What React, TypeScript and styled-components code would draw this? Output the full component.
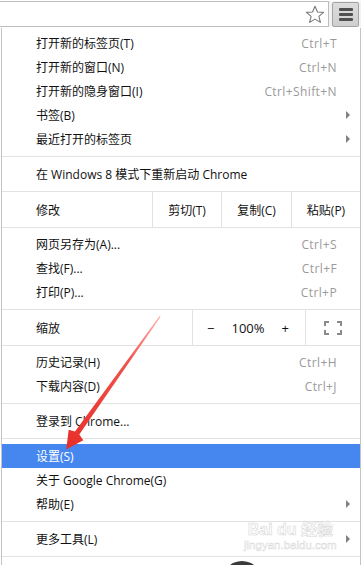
import styled, { createGlobalStyle } from "styled-components";

const GlobalStyle = createGlobalStyle`
	html, body {
		margin: 0;
		padding: 0;
		background: #fff;
	}
	body {
		font-family: "Open Sans", "Noto Sans CJK SC", sans-serif;
		font-size: 12px;
		color: #111;
	}
`;

type Item = {
	label: string;
	shortcut?: string;
	submenu?: boolean;
	active?: boolean;
};

const group1: Item[] = [
	{ label: "打开新的标签页(T)", shortcut: "Ctrl+T" },
	{ label: "打开新的窗口(N)", shortcut: "Ctrl+N" },
	{ label: "打开新的隐身窗口(I)", shortcut: "Ctrl+Shift+N" },
	{ label: "书签(B)", submenu: true },
	{ label: "最近打开的标签页", submenu: true },
];

const group2: Item[] = [
	{ label: "网页另存为(A)...", shortcut: "Ctrl+S" },
	{ label: "查找(F)...", shortcut: "Ctrl+F" },
	{ label: "打印(P)...", shortcut: "Ctrl+P" },
];

const group3: Item[] = [
	{ label: "历史记录(H)", shortcut: "Ctrl+H" },
	{ label: "下载内容(D)", shortcut: "Ctrl+J" },
];

const group4: Item[] = [
	{ label: "设置(S)", active: true },
	{ label: "关于 Google Chrome(G)" },
	{ label: "帮助(E)", submenu: true },
];

const MenuRow = ({ item }: { item: Item }) => (
	<Row $active={item.active}>
		<span>{item.label}</span>
		{item.shortcut && <Shortcut>{item.shortcut}</Shortcut>}
		{item.submenu && <Chevron />}
	</Row>
);

const App = () => {
	return (
		<Page>
			<GlobalStyle />
			<Toolbar>
				<AddressBox>
					<svg width="20" height="19" viewBox="0 0 20 19">
						<path
							d="M10 1.2 L12.5 7 L18.6 7.4 L13.9 11.3 L15.4 17.4 L10 14.1 L4.6 17.4 L6.1 11.3 L1.4 7.4 L7.5 7 Z"
							fill="none"
							stroke="#7a7a7a"
							strokeWidth="1.1"
							strokeLinejoin="round"
						/>
					</svg>
				</AddressBox>
				<MenuButton>
					<Bar />
					<Bar />
					<Bar />
				</MenuButton>
			</Toolbar>

			<Menu>
				<Group $top={3}>
					{group1.map((item) => (
						<MenuRow key={item.label} item={item} />
					))}
				</Group>
				<Separator />
				<MenuRow item={{ label: "在 Windows 8 模式下重新启动 Chrome" }} />
				<ButtonRow>
					<RowLabel>修改</RowLabel>
					<Cell $width={69}>剪切(T)</Cell>
					<Cell $width={70}>复制(C)</Cell>
					<Cell $width={69}>粘贴(P)</Cell>
				</ButtonRow>
				{group2.map((item) => (
					<MenuRow key={item.label} item={item} />
				))}
				<ButtonRow>
					<RowLabel>缩放</RowLabel>
					<ZoomCell>
						<span>−</span>
						<span>100%</span>
						<span>+</span>
					</ZoomCell>
					<Cell $width={55}>
						<svg width="18" height="14" viewBox="0 0 18 14">
							<path
								d="M1 5V1H5 M13 1H17V5 M17 9V13H13 M5 13H1V9"
								fill="none"
								stroke="#8a8a8a"
								strokeWidth="2"
							/>
						</svg>
					</Cell>
				</ButtonRow>
				{group3.map((item) => (
					<MenuRow key={item.label} item={item} />
				))}
				<Separator />
				<MenuRow item={{ label: "登录到 Chrome..." }} />
				<Separator />
				{group4.map((item) => (
					<MenuRow key={item.label} item={item} />
				))}
				<Separator />
				<MenuRow item={{ label: "更多工具(L)", submenu: true }} />
				<Separator />
			</Menu>

			<Watermark>
				<WatermarkLogo>Bai du 经验</WatermarkLogo>
				<WatermarkUrl>jingyan.baidu.com</WatermarkUrl>
			</Watermark>

			<DarkBlob />

			<ArrowLayer width="361" height="565" viewBox="0 0 361 565">
				<defs>
					<linearGradient id="arrowFade" x1="160" y1="316" x2="70" y2="445" gradientUnits="userSpaceOnUse">
						<stop offset="0" stopColor="#ffb3b3" />
						<stop offset="0.35" stopColor="#f0534d" />
						<stop offset="1" stopColor="#e8302a" />
					</linearGradient>
				</defs>
				<polygon
					points="159.6,316 160.6,316.8 79.3,434.4 83.3,440.2 66.2,449.5 68.7,429.8 75,431.5"
					fill="url(#arrowFade)"
				/>
			</ArrowLayer>
		</Page>
	);
};

export default App;

const Page = styled.div`
	position: relative;
	width: 361px;
	height: 565px;
	overflow: hidden;
	background: #fff;
`;

const Toolbar = styled.div`
	display: flex;
	align-items: stretch;
	height: 28px;
	box-sizing: border-box;
	border-top: 1px solid #fff;
	border-bottom: 1px solid #fff;
	background: #f2f2f2;
`;

const AddressBox = styled.div`
	flex: 1;
	display: flex;
	align-items: center;
	justify-content: flex-end;
	padding-right: 3px;
	background: #fff;
	border: 1px solid #bcbcbc;
	border-left: none;
	margin-right: 3px;
`;

const MenuButton = styled.div`
	width: 27px;
	margin: 1px 2px 0 0;
	box-sizing: border-box;
	display: flex;
	flex-direction: column;
	align-items: center;
	justify-content: center;
	gap: 2px;
	background: linear-gradient(#dcdcdc, #cfcfcf);
	border: 1px solid #a3a3a3;
	border-radius: 2px;
`;

const Bar = styled.div`
	width: 14px;
	height: 3px;
	background: #505050;
	border-radius: 1px;
`;

const Menu = styled.div`
	margin-left: 1px;
	width: 358px;
	min-height: 540px;
	border-left: 1px solid #c4c4c4;
	border-right: 1px solid #c4c4c4;
	background: #fff;
`;

const Group = styled.div<{ $top: number }>`
	padding-top: ${(p) => p.$top}px;
`;

const Row = styled.div<{ $active?: boolean }>`
	display: flex;
	align-items: center;
	justify-content: space-between;
	height: 24px;
	padding: 0 23px 0 34px;
	background: ${(p) => (p.$active ? "#4687ef" : "transparent")};
	color: ${(p) => (p.$active ? "#fff" : "#111")};
	white-space: nowrap;
	position: relative;
`;

const Shortcut = styled.span`
	color: #9a9a9a;
	letter-spacing: 0.4px;
`;

const Chevron = styled.span`
	position: absolute;
	right: 10px;
	top: 8px;
	width: 0;
	height: 0;
	border-top: 4px solid transparent;
	border-bottom: 4px solid transparent;
	border-left: 4px solid #808080;
`;

const Separator = styled.div`
	height: 1px;
	margin: 5px 0;
	background: #e2e2e2;
`;

const ButtonRow = styled.div`
	display: flex;
	align-items: stretch;
	height: 35px;
	margin: 5px 0 4px;
	border-top: 1px solid #e2e2e2;
	border-bottom: 1px solid #e2e2e2;
`;

const RowLabel = styled.div`
	flex: 1;
	display: flex;
	align-items: center;
	padding-left: 34px;
`;

const Cell = styled.div<{ $width: number }>`
	width: ${(p) => p.$width}px;
	box-sizing: border-box;
	display: flex;
	align-items: center;
	justify-content: center;
	border-left: 1px solid #e2e2e2;
`;

const ZoomCell = styled.div`
	width: 113px;
	box-sizing: border-box;
	display: flex;
	align-items: center;
	justify-content: space-between;
	padding: 0 16px 0 14px;
	border-left: 1px solid #e2e2e2;
	font-size: 13px;
`;

const Watermark = styled.div`
	position: absolute;
	left: 244px;
	top: 521px;
	display: flex;
	flex-direction: column;
	align-items: center;
	color: rgba(255, 255, 255, 0.9);
	pointer-events: none;
`;

const WatermarkLogo = styled.div`
	font-family: "Liberation Sans", "Noto Sans CJK SC", sans-serif;
	font-size: 16px;
	font-weight: bold;
	line-height: 18px;
	-webkit-text-stroke: 0.6px #d6d6d6;
`;

const WatermarkUrl = styled.div`
	font-family: "Liberation Sans", sans-serif;
	font-size: 11.5px;
	line-height: 13px;
	-webkit-text-stroke: 0.5px #dadada;
`;

const DarkBlob = styled.div`
	position: absolute;
	left: 222px;
	top: 561px;
	width: 40px;
	height: 40px;
	border-radius: 50%;
	background: #3a3a3a;
`;

const ArrowLayer = styled.svg`
	position: absolute;
	left: 0;
	top: 0;
	pointer-events: none;
`;
